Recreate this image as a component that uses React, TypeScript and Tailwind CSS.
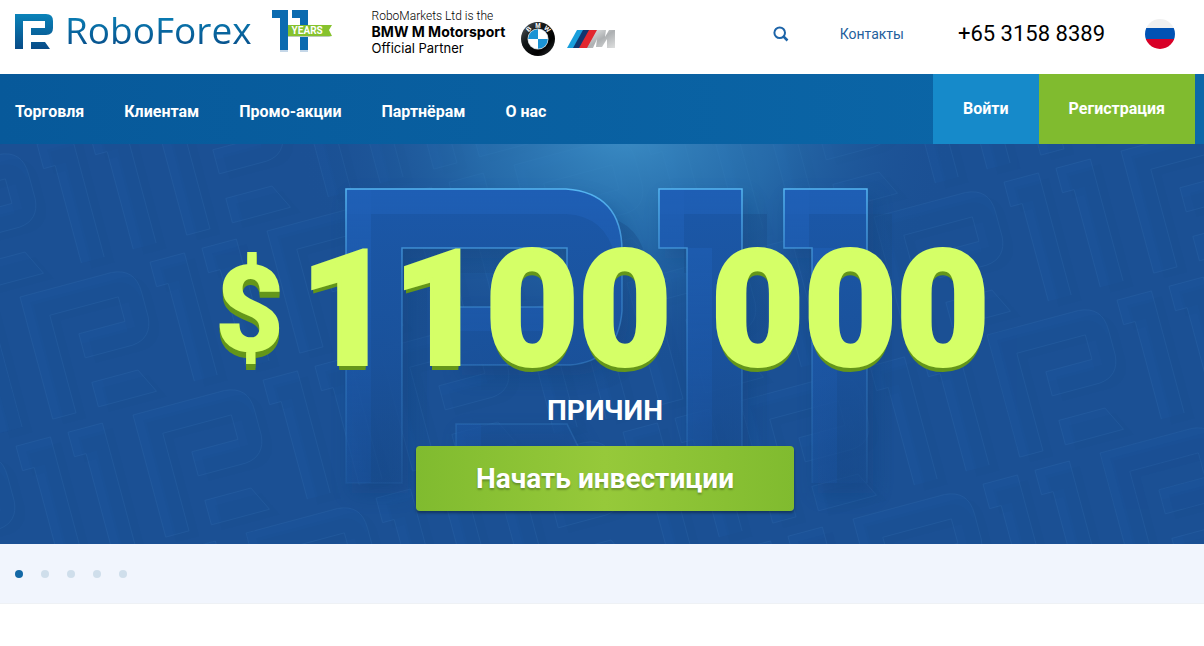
import React, { useState } from 'react';

const NAV_LINKS = ['Торговля', 'Клиентам', 'Промо-акции', 'Партнёрам', 'О нас'];

const SLIDES = [1, 2, 3, 4, 5];

// Lattice of small emblems behind the hero
const PATTERN: { x: number; y: number }[] = [];
for (let i = -3; i <= 6; i++) {
  for (let j = -3; j <= 6; j++) {
    const x = 20 + i * 247 + j * 113;
    const y = 153 - i * 66 + j * 118;
    if (x > -280 && x < 1230 && y > -140 && y < 480) {
      PATTERN.push({ x, y });
    }
  }
}

const BOWL = 'M0 0H220Q276 4 276 62V122Q272 172 224 176H110V118H221V59H56V294H0Z';
const FOOT = 'M110 235H221L250 294H110Z';

const RoboMark: React.FC = () => (
  <svg className="w-[38px] h-[36px] shrink-0" viewBox="0 0 38 36" aria-hidden="true">
    <defs>
      <linearGradient id="mark" x1="0" y1="0" x2="0" y2="1">
        <stop offset="0" stopColor="#0a83b9" />
        <stop offset="1" stopColor="#084b87" />
      </linearGradient>
    </defs>
    <path
      fill="url(#mark)"
      d="M0 0H31Q38 0 38 7V14Q38 21 31 21H16V14H30V7H8V35H0ZM16 28H30L35 35H16Z"
    />
  </svg>
);

const Anniversary: React.FC = () => (
  <div className="relative w-[60px] h-[42px] shrink-0">
    <svg className="w-full h-full" viewBox="0 0 60 42" aria-hidden="true">
      <rect x="8" y="38" width="8" height="4" fill="#c5d7e8" />
      <rect x="28" y="38" width="8" height="4" fill="#c5d7e8" />
      <g fill="#0b6bb0">
        <rect x="0" y="0" width="16" height="8" />
        <rect x="8" y="0" width="8" height="40" />
        <rect x="20" y="0" width="16" height="8" />
        <rect x="28" y="0" width="8" height="40" />
      </g>
      <path d="M16 26H60L57 27H16Z" fill="#bccabb" />
      <path d="M16 15H60L57 20L60 26H16Z" fill="#86c22d" />
    </svg>
    <span className="absolute left-5 top-[15px] font-[Roboto] text-[10px] leading-[11px] font-bold text-white">
      YEARS
    </span>
  </div>
);

const Roundel: React.FC = () => (
  <svg className="w-[34px] h-[36px]" viewBox="0 0 34 36" aria-hidden="true">
    <defs>
      <linearGradient id="ring" x1="0" y1="0" x2="1" y2="1">
        <stop offset="0" stopColor="#5c6266" />
        <stop offset="0.35" stopColor="#14181a" />
        <stop offset="0.7" stopColor="#000" />
        <stop offset="1" stopColor="#30363a" />
      </linearGradient>
    </defs>
    <circle cx="17" cy="18" r="17" fill="url(#ring)" />
    <circle cx="17" cy="18" r="10.5" fill="#c9d0d4" />
    <circle cx="17" cy="18" r="9.8" fill="#fff" />
    <path d="M17 18V8.2A9.8 9.8 0 0 0 7.2 18ZM17 18V27.8A9.8 9.8 0 0 0 26.8 18Z" fill="#1b93d4" />
    <g fill="#fff" fontFamily="Liberation Sans" fontWeight="700" fontSize="6.5" textAnchor="middle">
      <text x="17" y="6.5" transform="rotate(-43 17 18)">B</text>
      <text x="17" y="6.5">M</text>
      <text x="17" y="6.5" transform="rotate(43 17 18)">W</text>
    </g>
  </svg>
);

const MStripes: React.FC = () => (
  <svg className="w-[48px] h-[18px]" viewBox="0 0 48 18" aria-hidden="true">
    <defs>
      <linearGradient id="silver" x1="0" y1="0" x2="1" y2="1">
        <stop offset="0" stopColor="#eceded" />
        <stop offset="0.5" stopColor="#adb0b2" />
        <stop offset="1" stopColor="#dedfdf" />
      </linearGradient>
    </defs>
    <path d="M10 0H17L7 18H0Z" fill="#1a9fdc" />
    <path d="M16 0H23L13 18H6Z" fill="#12366f" />
    <path d="M22 0H31L21 18H12Z" fill="#e2272f" />
    <path d="M30 0H39L38 7L42 0H48V18H40V9L35 17H29L30 9L26 18H20Z" fill="url(#silver)" />
  </svg>
);

const Flag: React.FC = () => (
  <svg className="w-[30px] h-[30px]" viewBox="0 0 30 30" aria-hidden="true">
    <clipPath id="disc">
      <circle cx="15" cy="15" r="15" />
    </clipPath>
    <g clipPath="url(#disc)">
      <rect width="30" height="10" fill="#f0f0f0" />
      <rect y="9" width="30" height="12" fill="#0052b4" />
      <rect y="20" width="30" height="10" fill="#d80027" />
    </g>
  </svg>
);

const HeroArt: React.FC = () => (
  <svg
    className="absolute inset-0 w-full h-full"
    viewBox="0 0 1204 400"
    preserveAspectRatio="xMidYMin slice"
    aria-hidden="true"
  >
    <defs>
      <radialGradient id="glow" gradientUnits="userSpaceOnUse" cx="0" cy="0" r="1" gradientTransform="translate(625 -10) scale(330 235)">
        <stop offset="0" stopColor="#3e92c9" stopOpacity="0.9" />
        <stop offset="0.45" stopColor="#2f80bb" stopOpacity="0.55" />
        <stop offset="1" stopColor="#1b5094" stopOpacity="0" />
      </radialGradient>
      <linearGradient id="face" gradientUnits="userSpaceOnUse" x1="0" y1="0" x2="0" y2="294">
        <stop offset="0" stopColor="#1b58a9" />
        <stop offset="0.6" stopColor="#1a529c" stopOpacity="0.9" />
        <stop offset="1" stopColor="#1b5094" stopOpacity="0.3" />
      </linearGradient>
      <linearGradient id="side" gradientUnits="userSpaceOnUse" x1="0" y1="0" x2="0" y2="294">
        <stop offset="0" stopColor="#2468c4" stopOpacity="0.85" />
        <stop offset="1" stopColor="#1c58ab" stopOpacity="0.45" />
      </linearGradient>
      <linearGradient id="edge" gradientUnits="userSpaceOnUse" x1="0" y1="0" x2="0" y2="294">
        <stop offset="0" stopColor="#55b6f2" />
        <stop offset="0.3" stopColor="#3f8fd6" stopOpacity="0.7" />
        <stop offset="1" stopColor="#3f8fd6" stopOpacity="0.1" />
      </linearGradient>
      <linearGradient id="drop" gradientUnits="userSpaceOnUse" x1="0" y1="0" x2="0" y2="294">
        <stop offset="0" stopColor="#184a86" stopOpacity="0.4" />
        <stop offset="1" stopColor="#184a86" stopOpacity="0" />
      </linearGradient>
      <filter id="soft" x="-20%" y="-20%" width="140%" height="140%">
        <feGaussianBlur stdDeviation="10" />
      </filter>
      <clipPath id="bowlClip">
        <path d={BOWL} />
      </clipPath>
      <g id="solid">
        <path d={BOWL} />
        <path d={FOOT} />
        <rect x="313" y="0" width="83" height="59" />
        <rect x="341" y="59" width="55" height="235" />
        <rect x="438" y="0" width="83" height="59" />
        <rect x="466" y="59" width="55" height="235" />
      </g>
      <g id="bevel">
        <g clipPath="url(#bowlClip)">
          <rect width="25" height="294" />
          <path d="M0 0H220Q276 4 276 62L270 72Q262 27 220 25H0Z" />
          <rect x="110" y="118" width="111" height="24" />
        </g>
        <rect x="110" y="235" width="25" height="59" />
        <rect x="313" y="0" width="83" height="25" />
        <rect x="313" y="0" width="25" height="59" />
        <rect x="341" y="59" width="25" height="235" />
        <rect x="438" y="0" width="83" height="25" />
        <rect x="438" y="0" width="25" height="59" />
        <rect x="466" y="59" width="25" height="235" />
      </g>
      <g id="rim" fill="none">
        <path d={BOWL} />
        <path d={FOOT} />
        <polyline points="341,294 341,59 313,59 313,0 396,0 396,294" />
        <polyline points="466,294 466,59 438,59 438,0 521,0 521,294" />
      </g>
    </defs>

    <rect width="1204" height="400" fill="#1b5094" />

    {PATTERN.map((p) => (
      <g key={`${p.x}:${p.y}`} transform={`translate(${p.x} ${p.y}) rotate(-15) scale(0.43)`}>
        <use href="#solid" x="20" y="18" fill="#174785" opacity="0.1" />
        <use href="#solid" fill="#1d5aa6" opacity="0.12" />
        <use href="#bevel" fill="#2265b4" opacity="0.08" />
        <use href="#rim" stroke="#4a8ccb" strokeWidth="2" opacity="0.15" />
      </g>
    ))}

    <rect width="1204" height="400" fill="url(#glow)" />

    {/* Large emblem */}
    <g transform="translate(346 45)">
      <use href="#solid" x="6" y="10" fill="#103a74" opacity="0.35" filter="url(#soft)" />
      <use href="#solid" x="25" y="25" fill="url(#drop)" />
      <use href="#solid" fill="url(#face)" />
      <use href="#bevel" fill="url(#side)" opacity="0.5" />
      <use href="#rim" stroke="url(#edge)" strokeWidth="1.5" />
    </g>
  </svg>
);

const Header: React.FC = () => (
  <header className="flex items-start justify-between h-[74px] bg-white pl-[15px] pr-[29px]">
    <div className="flex items-start">
      <a href="#home" className="flex items-start pt-[14px]">
        <RoboMark />
        <span className="ml-3 h-9 bg-linear-to-b from-[#0a80b6] to-[#084b87] bg-clip-text font-['Open_Sans'] text-[37px] leading-8 text-transparent">
          RoboForex
        </span>
      </a>
      <div className="ml-5 pt-[10px]">
        <Anniversary />
      </div>
      <div className="ml-10 pt-2 text-black whitespace-nowrap">
        <p className="text-[12px] leading-4 font-light">RoboMarkets Ltd is the</p>
        <p className="font-[Inter] text-[14px] leading-4 font-bold">BMW M Motorsport</p>
        <p className="font-[Inter] text-[13px] leading-4">Official Partner</p>
      </div>
      <div className="ml-4 flex items-center gap-3 pt-[21px]">
        <Roundel />
        <MStripes />
      </div>
    </div>

    <div className="flex h-[68px] items-center">
      <button type="button" aria-label="Поиск" className="text-[#1d64a8]">
        <svg className="w-4 h-4" viewBox="0 0 16 16" fill="none" stroke="currentColor" aria-hidden="true">
          <circle cx="6.7" cy="6.7" r="5.3" strokeWidth="2" />
          <path d="M10.5 10.5L14.5 14.5" strokeWidth="2.5" />
        </svg>
      </button>
      <a href="#contacts" className="ml-[51px] text-[14px] text-[#24609c]">
        Контакты
      </a>
      <a href="tel:+6531588389" className="ml-[54px] text-[22px] leading-7 text-black">
        +65 3158 8389
      </a>
      <button type="button" aria-label="Русский" className="ml-10 rounded-full">
        <Flag />
      </button>
    </div>
  </header>
);

const NavBar: React.FC = () => (
  <nav className="flex h-[70px] justify-between bg-linear-to-r from-[#07599a] to-[#0c68a9] pl-[15px] pr-[9px] text-[16px] font-bold text-white">
    <div className="flex items-center gap-10 pt-1.5">
      {NAV_LINKS.map((link) => (
        <a key={link} href="#menu">
          {link}
        </a>
      ))}
    </div>
    <div className="flex">
      <a href="#login" className="flex items-center bg-[#168aca] px-[30px]">
        Войти
      </a>
      <a href="#register" className="flex items-center bg-[#80bb2f] px-[30px]">
        Регистрация
      </a>
    </div>
  </nav>
);

const App: React.FC = () => {
  const [slide, setSlide] = useState(1);

  return (
    <div className="min-h-screen bg-white font-[Roboto,sans-serif]">
      <Header />
      <NavBar />

      <section className="relative h-[400px] overflow-hidden bg-[#1b5094]">
        <HeroArt />
        <div className="relative flex flex-col items-center pt-[86px] pl-1.5">
          <h1 className="flex items-center pr-1.5 text-[160px] leading-[160px] font-black whitespace-nowrap text-[#d5ff67] [-webkit-text-stroke:4px_#d5ff67] [text-shadow:0_2px_0_#64961a,0_4px_0_#64961a,0_6px_0_#64961a]">
            <span className="mr-4 text-[120px] [-webkit-text-stroke:0]">$</span>
            <span>1</span>
            <span>100</span>
            <span className="ml-10">000</span>
          </h1>
          <p className="text-[28px] leading-[42px] font-bold text-white uppercase">Причин</p>
          <a
            href="#invest"
            className="mt-3.5 flex h-[65px] items-center rounded bg-linear-to-r from-[#80bb2f] via-[#96c93a] to-[#80bb2f] px-[60px] text-[28px] font-bold text-white shadow-[0_2px_3px_rgba(0,0,0,0.35)] [text-shadow:0_2px_2px_rgba(0,0,0,0.25)]"
          >
            Начать инвестиции
          </a>
        </div>
      </section>

      <div className="flex h-[60px] items-center gap-[18px] border-b border-[#eef1f5] bg-[#f1f5fd] pl-[15px]">
        {SLIDES.map((n) => (
          <button
            key={n}
            type="button"
            aria-label={`Слайд ${n}`}
            onClick={() => setSlide(n)}
            className={`h-2 w-2 rounded-full ${n === slide ? 'bg-[#1368a6]' : 'bg-[#cfdeeb]'}`}
          />
        ))}
      </div>
    </div>
  );
};

export default App;
